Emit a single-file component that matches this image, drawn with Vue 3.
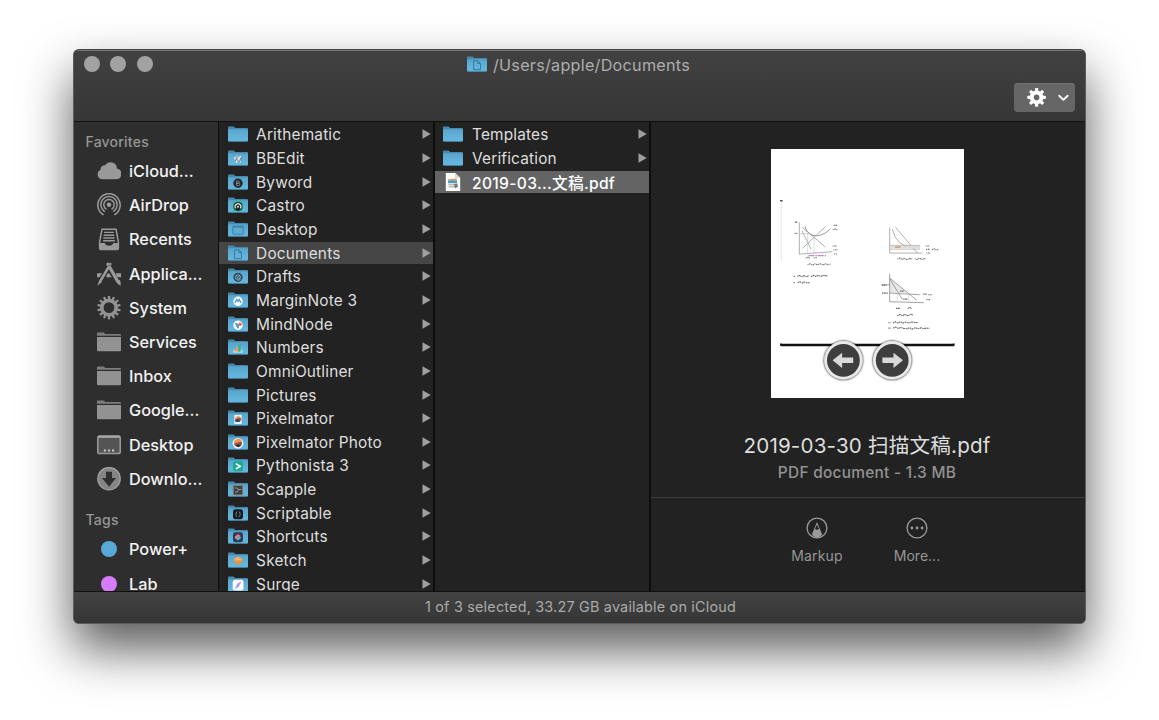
<script setup>
const favorites = [
  ['cloud', 'iCloud...'],
  ['airdrop', 'AirDrop'],
  ['recents', 'Recents'],
  ['apps', 'Applica...'],
  ['gear', 'System'],
  ['folder', 'Services'],
  ['folder', 'Inbox'],
  ['folder', 'Google...'],
  ['desktop', 'Desktop'],
  ['download', 'Downlo...'],
]
const tags = [
  ['blue', 'Power+'],
  ['purple', 'Lab'],
]
const folders = [
  ['', 'Arithematic'],
  ['bbedit', 'BBEdit'],
  ['byword', 'Byword'],
  ['castro', 'Castro'],
  ['desk', 'Desktop'],
  ['doc', 'Documents'],
  ['drafts', 'Drafts'],
  ['margin', 'MarginNote 3'],
  ['mind', 'MindNode'],
  ['numbers', 'Numbers'],
  ['', 'OmniOutliner'],
  ['', 'Pictures'],
  ['pixel', 'Pixelmator'],
  ['photo', 'Pixelmator Photo'],
  ['python', 'Pythonista 3'],
  ['scapple', 'Scapple'],
  ['script', 'Scriptable'],
  ['shortcuts', 'Shortcuts'],
  ['sketch', 'Sketch'],
  ['surge', 'Surge'],
]
const documents = [
  ['', 'Templates'],
  ['', 'Verification'],
]
const teeth8 = [0, 45, 90, 135, 180, 225, 270, 315]
const teeth14 = Array.from({ length: 14 }, (_, i) => (i * 360) / 14)
</script>

<template>
  <svg class="defs" width="0" height="0">
    <defs>
      <linearGradient id="fg" x1="0" y1="0" x2="0" y2="1">
        <stop offset="0" stop-color="#58a5cd" />
        <stop offset="1" stop-color="#67b9e0" />
      </linearGradient>
      <symbol id="fold" viewBox="0 0 20 16">
        <path d="M0 2.2V1.4Q0 .5 .9 .5H5.3Q6 .5 6.4 1.1L7 2H19.1Q20 2 20 2.9V5H0Z" fill="#4489ae" />
        <path d="M0 4.1Q0 3.3 .8 3.3H19.2Q20 3.3 20 4.1V14.6Q20 15.6 19 15.6H1Q0 15.6 0 14.6Z" fill="url(#fg)" />
        <path d="M.5 15.3H19.5" stroke="#468fb5" stroke-width=".6" />
      </symbol>
    </defs>
  </svg>
  <main class="page">
    <section class="window">
      <header class="toolbar">
        <div class="lights"><i></i><i></i><i></i></div>
        <div class="title">
          <svg width="20" height="16" viewBox="0 0 20 16">
            <use href="#fold" width="20" height="16" />
            <path d="M6.6 4.8H10.8L13.5 7.5V13.6H6.6ZM10.8 4.8V7.5H13.5" fill="none" stroke="#32789e" stroke-width=".9" />
          </svg>
          <span class="t-title">/Users/apple/Documents</span>
        </div>
        <div class="action">
          <svg width="61" height="29" viewBox="0 0 61 29">
            <g transform="translate(22.6 14.4)">
              <rect v-for="a in teeth8" :key="a" x="-1.6" y="-9.3" width="3.2" height="5" rx=".8" fill="#fff" :transform="`rotate(${a})`" />
              <circle r="4.8" fill="none" stroke="#fff" stroke-width="4" />
            </g>
            <path d="M45.2 12.7L49.4 16.9L53.6 12.7" fill="none" stroke="#f4f4f4" stroke-width="2" stroke-linecap="round" stroke-linejoin="round" />
          </svg>
        </div>
      </header>

      <div class="body">
        <aside class="sidebar">
          <h2>Favorites</h2>
          <div v-for="[icon, name] in favorites" :key="name" class="side-row">
            <svg width="24" height="24" viewBox="0 0 24 24">
              <path v-if="icon === 'cloud'" fill="#999" d="M5 20.3A5 5 0 0 1 3.5 10.8A4.2 4.2 0 0 1 8.2 6.3A6.3 6.3 0 0 1 19.9 9.4A5.5 5.5 0 0 1 19 20.3Z" />
              <g v-else-if="icon === 'airdrop'" fill="none" stroke="#9b9b9b" stroke-width="1.5" stroke-linecap="round">
                <path d="M6 21.5A11.2 11.2 0 1 1 18 21.5" />
                <path d="M7.3 18.3A8.2 8.2 0 1 1 16.7 18.3" />
                <path d="M9 15.9A5.2 5.2 0 1 1 15 15.9" />
                <circle cx="12" cy="11.8" r="2.3" fill="#9b9b9b" stroke="none" />
              </g>
              <g v-else-if="icon === 'recents'">
                <path d="M5 2.2H19L21.4 15V20.8Q21.4 22.6 19.6 22.6H4.4Q2.6 22.6 2.6 20.8V15Z" fill="none" stroke="#9b9b9b" stroke-width="1.5" stroke-linejoin="round" />
                <path d="M7.1 5.4H16.9M6.7 8.2H17.3M6.4 11H17.6M6.1 13.8H17.9" stroke="#9b9b9b" stroke-width="1.4" />
                <path d="M2.4 16H7.8Q8.2 18.8 12 18.8T16.2 16H21.6V20.9Q21.6 22.8 19.6 22.8H4.4Q2.4 22.8 2.4 20.9Z" fill="#9b9b9b" />
              </g>
              <g v-else-if="icon === 'apps'" stroke="#9b9b9b" fill="none">
                <path d="M0 13.2H6.2M9.3 13.2H15M19 13.2H24" stroke-width="4" />
                <path d="M13.4 2L3 19.5" stroke="#2e2e2e" stroke-width="5" />
                <path d="M11 4L21 21" stroke="#2e2e2e" stroke-width="5.4" />
                <path d="M13.3 2.2L3.2 19.4" stroke-width="2.6" stroke-linecap="round" />
                <path d="M2.1 18.7L4.7 20.2L.3 23.7Z" fill="#9b9b9b" stroke="none" />
                <path d="M10.9 2.2L20.2 18.4" stroke-width="3.2" stroke-linecap="round" />
                <path d="M19.2 19.8L22.6 17.8Q24.2 20.7 23.5 23.7Q20.5 22.5 19.2 19.8Z" fill="#9b9b9b" stroke="none" />
                <path d="M10.5 4.4L13.4 2.9" stroke="#2e2e2e" stroke-width=".6" />
              </g>
              <g v-else-if="icon === 'gear'" transform="translate(12 11.6)">
                <rect v-for="a in teeth14" :key="a" x="-1.15" y="-11.8" width="2.3" height="5" rx=".7" fill="#929292" :transform="`rotate(${a})`" />
                <circle r="7.2" fill="none" stroke="#929292" stroke-width="3.6" />
              </g>
              <g v-else-if="icon === 'folder'">
                <path d="M0 5.7V3.5Q0 2.6 .9 2.6H6.7L8.3 3.9H23Q24 3.9 24 4.9V5.7Z" fill="#7d7d7d" />
                <path d="M0 7.1H24V20.2Q24 21.3 22.9 21.3H1.1Q0 21.3 0 20.2Z" fill="#929292" />
              </g>
              <g v-else-if="icon === 'desktop'">
                <rect x=".8" y="3.1" width="22.4" height="17.4" rx="1.8" fill="#545454" stroke="#999" stroke-width="1.6" />
                <path d="M1 3.8H23" stroke="#a5a5a5" stroke-width="2.2" />
                <path d="M6.8 17.5H9M10.9 17.5H13.1M15 17.5H17.2" stroke="#c5c5c5" stroke-width="2.2" />
              </g>
              <g v-else>
                <circle cx="12" cy="11.7" r="11.2" fill="#858585" stroke="#a0a0a0" stroke-width="1.3" />
                <path d="M9 4.7H15V11.1H19L12 19.7L5 11.1H9Z" fill="#2e2e2e" />
              </g>
            </svg>
            <span>{{ name }}</span>
          </div>
          <h2 class="tags">Tags</h2>
          <div v-for="[color, name] in tags" :key="name" class="side-row">
            <i class="dot" :class="color"></i>
            <span>{{ name }}</span>
          </div>
        </aside>

        <div class="column">
          <div v-for="[badge, name] in folders" :key="name" class="row" :class="{ open: badge === 'doc' }">
            <svg class="ficon" width="20" height="16" viewBox="0 0 20 16">
              <use href="#fold" width="20" height="16" />
              <g v-if="badge === 'bbedit'" fill="none">
                <path d="M6.4 7L9 12.8M8.8 5.8L12.4 12.6M12.8 6L10.8 9" stroke="#e4e0dc" stroke-width="1.7" />
                <path d="M7 11.4L9.6 6.6M10.8 12.6L13.6 7" stroke="#777f88" stroke-width="1" />
              </g>
              <g v-else-if="badge === 'byword'">
                <circle cx="10" cy="9.3" r="4.7" fill="#25292c" />
                <path d="M8.6 7V11.6H10.5Q11.8 11.5 11.7 10.3Q11.5 9.3 10.4 9.3H8.8H10.3Q11.4 9.2 11.3 8.1Q11.1 7 10.2 7Z" fill="none" stroke="#91979b" stroke-width=".8" />
              </g>
              <g v-else-if="badge === 'castro'">
                <rect x="5.1" y="4.6" width="9.8" height="9.6" rx="2.3" fill="#19b982" />
                <circle cx="10" cy="9.4" r="4.5" fill="#20282a" />
                <path d="M7.6 11.3A2.9 2.9 0 1 1 12.4 11.3" fill="none" stroke="#e4eee9" stroke-width="1.2" />
                <circle cx="10" cy="9.8" r="1" fill="#e4eee9" />
              </g>
              <g v-else-if="badge === 'desk'">
                <rect x="4.8" y="5.2" width="10.4" height="8.1" rx=".5" fill="#5eacd2" stroke="#347b9f" stroke-width=".8" />
                <path d="M5 6.1H15" stroke="#347b9f" />
              </g>
              <path v-else-if="badge === 'doc'" d="M6.6 4.8H10.8L13.5 7.5V13.6H6.6ZM10.8 4.8V7.5H13.5" fill="none" stroke="#32789e" stroke-width=".9" />
              <g v-else-if="badge === 'drafts'">
                <circle cx="10" cy="9.3" r="4.6" fill="#344858" />
                <path d="M12.6 11.6Q8.5 13 7.5 9.9Q7.5 6.7 10.4 6.8Q13 7.2 12.3 10.2Q10.2 11.8 9.2 10Q9.5 8 11.4 8.7" fill="none" stroke="#83b8dd" stroke-width=".9" />
              </g>
              <g v-else-if="badge === 'margin'">
                <circle cx="10" cy="9.3" r="4.7" fill="#fff" />
                <path d="M6.9 11L8.8 7.4L10 9.4L11.3 7.4L13.1 11" fill="none" stroke="#5c9fce" stroke-width="1.4" />
              </g>
              <g v-else-if="badge === 'mind'">
                <circle cx="10" cy="9.3" r="4.7" fill="#fafafa" />
                <path d="M10 12.3V9.5L7.5 7.3" fill="none" stroke="#3586aa" stroke-width="1.6" />
                <circle cx="12" cy="8.2" r="1.7" fill="#ee6949" />
                <circle cx="9.6" cy="9.8" r="1.6" fill="#40a9d5" />
              </g>
              <g v-else-if="badge === 'numbers'">
                <path d="M5.2 12.8H14.8" stroke="#d1e8ef" stroke-width="1.5" />
                <path d="M6.4 12.8V10.7" stroke="#e9c26b" stroke-width="2" />
                <path d="M9 12.8V7.8" stroke="#f09b68" stroke-width="2" />
                <path d="M11.5 12.8V5.5" stroke="#34b477" stroke-width="2" />
                <path d="M13.8 12.8V10" stroke="#83d7e8" stroke-width="1.7" />
              </g>
              <g v-else-if="badge === 'pixel'">
                <rect x="6.3" y="4.8" width="7.4" height="9.2" fill="#eee" />
                <path d="M6.9 9Q9 5 12.6 7V10.5H7Z" fill="#e58341" />
                <path d="M7.1 9.8L10 8.4L12.7 9.6L11.5 12H7.5Z" fill="#344c72" />
                <path d="M10.5 8.2L13.6 8.8L12.2 11Z" fill="#b84232" />
              </g>
              <g v-else-if="badge === 'photo'">
                <circle cx="10" cy="9.3" r="5.4" fill="#f7f7f7" />
                <path d="M5.9 9.8A4.2 4.2 0 0 1 14.1 8Q10 7.5 5.9 9.8Z" fill="#ee994a" />
                <path d="M5.9 9.8Q10 7.3 14.1 8.2L13.8 10.6Q9.5 9 6.2 10.8Z" fill="#a93d32" />
                <path d="M6.2 10.8Q10 9.3 13.8 10.6Q10.8 15.6 6.2 10.8Z" fill="#303438" />
              </g>
              <g v-else-if="badge === 'python'">
                <rect x="5" y="4.3" width="10" height="10" rx="2" fill="#18aa8d" />
                <path d="M7.7 6.6L12.2 9.3L7.7 12" fill="none" stroke="#fff" stroke-width="1.6" />
              </g>
              <g v-else-if="badge === 'scapple'">
                <rect x="5.3" y="4.5" width="9.4" height="9.4" fill="#3d4143" stroke="#a07b5b" stroke-width=".8" />
                <path d="M6.6 7H9.2M10.7 8.5H13.4M7 11H9.5M9 7.4L11 8.5L9 11" fill="none" stroke="#a4a49e" stroke-width=".8" />
              </g>
              <g v-else-if="badge === 'script'">
                <rect x="5" y="4.3" width="10" height="10" rx="2.4" fill="#171b1f" />
                <path d="M9.2 6.8Q8 6.8 8.2 8.2L7.7 9.3L8.2 10.4Q8 11.8 9.2 11.8M10.8 6.8Q12 6.8 11.8 8.2L12.3 9.3L11.8 10.4Q12 11.8 10.8 11.8" fill="none" stroke="#8d9496" stroke-width=".8" />
              </g>
              <g v-else-if="badge === 'shortcuts'">
                <rect x="5" y="4.3" width="10" height="10" rx="2.4" fill="#2c3a4f" />
                <path d="M7.2 8.2L10 5.9L12.7 8L10 9.6Z" fill="#f0688d" />
                <path d="M7.2 10.3L10 8.6L12.7 10.4L10 12.6Z" fill="#43bdc9" />
                <circle cx="8.3" cy="9.2" r="1.4" fill="#ed7f75" />
                <circle cx="11.6" cy="9.4" r="1.2" fill="#8e89da" />
              </g>
              <g v-else-if="badge === 'sketch'">
                <path d="M7.5 5.3H12.5L14.8 8.4L10 13.6L5.2 8.4Z" fill="#e7953d" />
                <path d="M7.5 5.3L10 4.9L12.5 5.3L14.8 8.4H5.2Z" fill="#efa759" />
                <path d="M7.8 8.2L10 5.3L12.2 8.2Z" fill="#f0bc80" />
              </g>
              <g v-else-if="badge === 'surge'">
                <rect x="4.7" y="3.8" width="10.8" height="10.8" rx="2.4" fill="#fbfbff" />
                <path d="M12.9 6L9.3 8.1V10.2L11 9.2Z" fill="#c978dd" stroke="#d08de2" stroke-width=".8" />
                <path d="M7.3 12.4L10.9 10.2V8.3L9.1 9.3Z" fill="#8798e8" stroke="#9aa8ec" stroke-width=".8" />
              </g>
            </svg>
            <span>{{ name }}</span>
            <svg class="arrow" width="9" height="10" viewBox="0 0 9 10"><path d="M.5 .3L8.7 5L.5 9.7Z" fill="#a0a0a0" /></svg>
          </div>
        </div>

        <div class="column second">
          <div v-for="[, name] in documents" :key="name" class="row">
            <svg class="ficon" width="20" height="16" viewBox="0 0 20 16"><use href="#fold" width="20" height="16" /></svg>
            <span>{{ name }}</span>
            <svg class="arrow" width="9" height="10" viewBox="0 0 9 10"><path d="M.5 .3L8.7 5L.5 9.7Z" fill="#a0a0a0" /></svg>
          </div>
          <div class="row selected">
            <svg class="ficon" width="20" height="20" viewBox="0 0 20 20">
              <path d="M2.8 1H12.2L17.2 5.8V19H2.8Z" fill="#fcfcfc" />
              <path d="M12.2 1V5.8H17.2Z" fill="#d2d2d2" />
              <path d="M4.8 7.2L13.6 6.4L14 9.4L5 9.8Z" fill="#c8a382" />
              <path d="M5 9.2L9 8.4L14 8.9V11.2H5Z" fill="#4e9cc4" />
              <path d="M5.3 12.8H12M5.6 14.8H12" stroke="#9a9a9a" stroke-width="1" />
              <path d="M11 12L14.3 11.5L14.9 15L12 16.2Z" fill="#777" />
            </svg>
            <span class="file-name">2019-03...文稿.pdf</span>
          </div>
        </div>

        <section class="preview">
          <svg class="paper" width="193" height="249" viewBox="0 0 193 249">
            <rect width="193" height="249" fill="#fff" />
            <g transform="translate(-6 -8.6) scale(.33333)" fill="none" stroke="#555" stroke-width="2">
              <path d="M49 184V362" stroke="#ddd" />
              <path d="M45 181H53" stroke="#555" stroke-width="4" />
              <g stroke="#8a8a8a">
                <path d="M103 246V341L203 334" />
                <path d="M112 324L181 259M112 261L181 320M111 271L138 326" />
                <path d="M120 258C127 290 165 298 196 265" stroke="#777" stroke-width="2.4" />
                <path d="M128 280V340M147 290V340" stroke="#bbb" stroke-width="1.5" />
                <path d="M104 280H139" stroke="#c5b8ad" />
                <path d="M374 261V338H472M392 261L457 338M382 266Q394 318 437 318H466" />
                <path d="M375 315H465M375 326H465" stroke="#999" />
              </g>
              <path d="M375 320H465" stroke="#ddd" stroke-width="8" />
              <path d="M390 320H407" stroke="#dda36c" stroke-width="5" />
              <path d="M131 346H183" stroke="#bf68b2" stroke-width="3" stroke-dasharray="17 3 6 2" />
              <g stroke="#707070" stroke-width="3.2" stroke-dasharray="3 2 5 1.5">
                <path d="M90 247L93 243L96 247M89 279H97M206 255H216M203 268L210 266L219 269M203 317H216M205 328H217M207 341H216M122 353L129 350L136 354M146 352H156" />
                <path d="M128 373L135 370L142 374L150 370L158 373L166 370L174 374L182 370L189 373L197 371" />
                <path d="M397 356L404 353L411 357L419 354L427 358L435 354L442 356M449 355L456 357L463 353L471 357L482 354" />
                <path d="M482 317H494M483 327H495M501 328L508 325L514 329L520 327M484 338H496" />
              </g>
            </g>
            <g transform="translate(-6 121.4) scale(.33333)" fill="none" stroke="#777" stroke-width="2">
              <path d="M374 25V67H428Z" fill="#e8e8e8" stroke="none" />
              <path d="M374 10V94L477 97M374 23L456 90M374 25L412 87M374 68L464 73M350 43H375" />
              <path d="M397 67V94M431 71V95" stroke="#ccc" />
              <g stroke="#6a6a6a" stroke-width="3.4" stroke-dasharray="4 1.5 6 2">
                <path d="M86 18H91M97 18L103 15L110 19L117 16L124 19L131 16M138 19L145 15L152 18L159 15L167 18L175 15L189 17" />
                <path d="M86 37H91M98 37L105 34L112 38L119 35L127 38L135 36" />
                <path d="M350 44H365M351 68H369M405 62H416M415 86H429M475 71H485M490 73H500M484 88H495M393 114H405M428 114L434 111L441 115" />
                <path d="M397 136L404 132L412 136L420 132L428 136L436 132L444 134M370 157H377M384 158L391 154L398 158L406 154L414 158L422 155L431 158L440 155L460 157" />
                <path d="M370 173H377M384 173L392 170L400 174L408 171L416 174L425 175L434 172L442 176L451 172L460 175L468 172L476 175L484 173L493 174" />
              </g>
              <path d="M48 219V223H566V219" stroke="#111" stroke-width="6" />
              <path d="M48 225H566" stroke="#111" stroke-width="5" />
            </g>
            <g v-for="(cx, i) in [72.4, 121.2]" :key="cx" :transform="`translate(${cx} 211.3)`">
              <circle r="21.2" fill="#000" opacity=".1" />
              <circle r="20.2" fill="#000" opacity=".3" />
              <circle r="19.2" fill="#e9e9e9" />
              <circle r="16.4" fill="#3e3e3e" />
              <path d="M-10.8 0L-1.3 -7.6V-2.8H9.8V2.8H-1.3V7.6Z" fill="#d9d9d9" :transform="i ? 'scale(-1 1)' : ''" />
            </g>
          </svg>
          <h1>2019-03-30 扫描文稿.pdf</h1>
          <p class="kind">PDF document - 1.3 MB</p>
          <div class="actions">
            <div class="act">
              <svg width="22" height="22" viewBox="0 0 22 22">
                <path d="M11 5L5.8 17.6Q8 20.8 11 20.8T16.2 17.6Z" fill="#9a9a9a" />
                <path d="M11 7.2L9 12.1Q11 13.6 13 12.1Z" fill="#222" />
                <path d="M11 5.7L10.3 8.6H11.7Z" fill="#9a9a9a" />
                <circle cx="11" cy="11" r="9.9" fill="none" stroke="#9a9a9a" stroke-width="1.3" />
              </svg>
              <span class="t-markup">Markup</span>
            </div>
            <div class="act">
              <svg width="22" height="22" viewBox="0 0 22 22">
                <circle cx="11" cy="11" r="9.9" fill="none" stroke="#9a9a9a" stroke-width="1.3" />
                <g fill="#9a9a9a"><circle cx="5.9" cy="11" r="1.4" /><circle cx="11" cy="11" r="1.4" /><circle cx="16.1" cy="11" r="1.4" /></g>
              </svg>
              <span>More...</span>
            </div>
          </div>
        </section>
      </div>
      <footer><span>1 of 3 selected, 33.27 GB available on iCloud</span></footer>
    </section>
  </main>
</template>

<style>
body {
  background: #fff;
  overflow: hidden;
}
</style>

<style scoped>
.defs {
  position: absolute;
}
.page {
  box-sizing: border-box;
  width: 1159px;
  height: 720px;
  padding: 49px 73px 0;
  font-family: Inter, "Noto Sans CJK SC", sans-serif;
  overflow: hidden;
}
.window {
  display: flex;
  flex-direction: column;
  box-sizing: border-box;
  width: 1013px;
  height: 575px;
  border: 1px solid #5c5c5c;
  border-top-color: #484848;
  border-radius: 6px;
  background: #222;
  overflow: hidden;
  box-shadow: 0 25px 50px rgba(0, 0, 0, 0.65);
}
.toolbar {
  display: grid;
  grid-template-columns: 200px 1fr 200px;
  flex: none;
  box-sizing: border-box;
  height: 72px;
  background: linear-gradient(#414141, #363636);
  border-top: 1px solid #767676;
  border-bottom: 1px solid #111;
}
.lights {
  display: flex;
  gap: 10.3px;
  padding: 5.4px 0 0 10px;
}
.lights i {
  width: 16px;
  height: 16px;
  border-radius: 50%;
  background: #a2a2a2;
}
.title {
  display: flex;
  justify-content: center;
  align-items: center;
  gap: 6px;
  height: 27px;
  padding-right: 2px;
  color: #adadad;
  font-size: 16.2px;
  letter-spacing: 0.25px;
}
.title svg {
  margin-bottom: 1px;
}
.action {
  justify-self: end;
  width: 61px;
  height: 29px;
  margin: 32px 10px 0 0;
  border-radius: 4px;
  background: #666;
  box-shadow: inset 0 1px #747474;
}
.action svg {
  display: block;
}
.body {
  display: flex;
  flex: none;
  height: 469px;
  overflow: hidden;
}
.sidebar {
  box-sizing: border-box;
  width: 145px;
  background: #2e2e2e;
  border-right: 1px solid #0c0c0c;
  overflow: hidden;
}
h2 {
  margin: 0;
  padding: 10px 0 0 11.5px;
  height: 22px;
  line-height: 20px;
  font-size: 14px;
  font-weight: 500;
  letter-spacing: 0.22px;
  color: #969696;
}
h2.tags {
  padding-top: 14.4px;
  height: 22px;
}
.side-row {
  display: flex;
  align-items: center;
  height: 34.2px;
  padding-left: 23px;
  gap: 8px;
  color: #f2f2f2;
  font-size: 16.3px;
  font-weight: 500;
  white-space: nowrap;
}
.side-row svg {
  flex: none;
}
.dot {
  width: 16px;
  height: 16px;
  margin: 0 4px;
  border-radius: 50%;
}
.blue {
  background: #58a9d7;
}
.purple {
  background: #d57cfb;
}
.column {
  box-sizing: border-box;
  width: 216px;
  flex: none;
  padding-top: 1.8px;
  border-right: 2px solid #0d0d0d;
  overflow: hidden;
}
.row {
  display: flex;
  align-items: center;
  height: 22px;
  margin-bottom: 1.66px;
  color: #dedede;
  font-size: 15.4px;
  letter-spacing: 0.18px;
  white-space: nowrap;
}
.ficon {
  flex: none;
  margin: 0 8.5px 1px 8.6px;
}
.second .ficon {
  margin: 0 9px 1px 8px;
}
.arrow {
  flex: none;
  margin: 0 2px 1px auto;
}
.open {
  background: #464646;
}
.selected {
  background: #646464;
  color: #fff;
}
.file-name {
  font-size: 15.6px;
  font-weight: 500;
  letter-spacing: 0.32px;
}
.preview {
  flex: 1;
  display: flex;
  flex-direction: column;
  align-items: center;
  padding-right: 2px;
}
.paper {
  flex: none;
  margin-top: 26.6px;
}
h1 {
  margin: 33.9px 0 0;
  height: 31px;
  line-height: 30px;
  font-size: 20.6px;
  font-weight: 400;
  letter-spacing: 0.17px;
  color: #dedede;
}
.kind {
  margin: 0;
  height: 22px;
  line-height: 22px;
  font-size: 15.4px;
  font-weight: 500;
  letter-spacing: 0.29px;
  color: #929292;
}
.actions {
  display: flex;
  justify-content: center;
  align-self: stretch;
  margin: 12.5px -2px 0 0;
  padding: 19px 2px 0 0;
  border-top: 1px solid #3b3b3b;
}
.act {
  display: flex;
  flex-direction: column;
  align-items: center;
  gap: 7px;
  width: 100px;
  color: #969696;
  font-size: 14px;
  line-height: 20px;
}
.t-markup {
  letter-spacing: 0.2px;
}
footer {
  flex: 1;
  display: flex;
  align-items: center;
  justify-content: center;
  background: linear-gradient(#424242, #363636);
  border-top: 1px solid #111;
  padding: 0 0 2px 2px;
  font-size: 14.4px;
  letter-spacing: 0.2px;
  color: #aaa;
}
</style>
